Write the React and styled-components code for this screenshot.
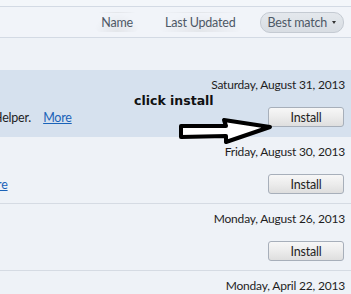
import React from 'react';
import styled, { createGlobalStyle } from 'styled-components';

const FONT = `Lato, 'Open Sans', sans-serif`;

const GlobalStyle = createGlobalStyle`
    html, body {
        margin: 0;
        padding: 0;
        background: #eef2f7;
        overflow: hidden;
    }
    body {
        font-family: ${FONT};
        letter-spacing: -0.2px;
    }
`;

const ROWS = [
    {
        date: 'Saturday, August 31, 2013',
        desc: 'Helper.',
        offset: -7,
        selected: true,
    },
    {
        date: 'Friday, August 30, 2013',
        desc: '',
        offset: -33,
    },
    {
        date: 'Monday, August 26, 2013',
        desc: null,
    },
    {
        date: 'Monday, April 22, 2013',
        desc: null,
        last: true,
    },
];

const Root = styled.div`
    width: 351px;
    height: 294px;
    overflow: hidden;
    background: #eef2f7;
    color: #1e1e1e;
`;
const TopStrip = styled.div`
    height: 6px;
    background: #f3f6fa;
    border-bottom: 1px solid #d3dae4;
`;
const SortBar = styled.div`
    display: flex;
    align-items: center;
    justify-content: flex-end;
    gap: 16px;
    height: 30px;
    padding-right: 7px;
    background: #f1f4f9;
    border-bottom: 1px solid #d3dae4;
`;
const SortItem = styled.div`
    display: flex;
    align-items: center;
    gap: 5px;
    height: 19px;
    padding: 0 7px;
    font-size: 12.5px;
    color: #4d5866;
    border-radius: 10px;
    background: ${({ active }) =>
        active
            ? 'linear-gradient(#e4e8ed, #d8dde3)'
            : 'radial-gradient(ellipse at 50% 100%, rgba(0,0,0,0.06), rgba(0,0,0,0) 70%)'};
    border: 1px solid ${({ active }) => (active ? '#c4cad2' : 'transparent')};
`;
const Caret = styled.span`
    width: 0;
    height: 0;
    border-left: 2.5px solid transparent;
    border-right: 2.5px solid transparent;
    border-top: 3px solid #333;
`;
const Spacer = styled.div`
    height: 32px;
`;
const Row = styled.div`
    position: relative;
    display: flex;
    flex-direction: column;
    height: ${({ last }) => (last ? 'auto' : '66px')};
    padding: 0 6px 0 0;
    background: ${({ selected }) => (selected ? '#d6e1ee' : 'transparent')};
    border-bottom: 1px solid ${({ selected }) => (selected ? '#d6e1ee' : '#d5dbe3')};
    box-sizing: content-box;
`;
const DateLine = styled.div`
    text-align: right;
    font-size: 12px;
    line-height: 16px;
    padding-top: 7px;
    color: #1e1e1e;
`;
const ActionLine = styled.div`
    display: flex;
    align-items: center;
    justify-content: space-between;
    margin-top: 14px;
`;
const Desc = styled.div`
    font-size: 12.5px;
    line-height: 16px;
    white-space: nowrap;
    color: #1e1e1e;
    margin-left: ${({ offset }) => offset}px;
    padding-top: 1px;
`;
const MoreLink = styled.a`
    color: #1a63b8;
    text-decoration: underline;
    margin-left: 12px;
    cursor: pointer;
`;
const InstallButton = styled.button`
    width: 76px;
    height: 20px;
    margin-right: 1px;
    padding: 0;
    font-family: ${FONT};
    font-size: 12.5px;
    letter-spacing: -0.2px;
    color: #1e1e1e;
    border: 1px solid #a7afba;
    border-radius: 3px;
    background: linear-gradient(#f7f7f7 0%, #ececec 50%, #dedede 100%);
`;
const Note = styled.div`
    position: absolute;
    left: 134px;
    top: 23px;
    font-family: 'DejaVu Sans', sans-serif;
    font-weight: bold;
    font-size: 12.5px;
    letter-spacing: 0;
    color: #111;
`;
const Arrow = styled.svg`
    position: absolute;
    left: 176px;
    top: 46px;
`;

const App = () => (
    <Root>
        <GlobalStyle />
        <TopStrip />
        <SortBar>
            <SortItem>Name</SortItem>
            <SortItem>Last Updated</SortItem>
            <SortItem active>
                Best match <Caret />
            </SortItem>
        </SortBar>
        <Spacer />
        {ROWS.map((row) => (
            <Row key={row.date} selected={row.selected} last={row.last}>
                <DateLine>{row.date}</DateLine>
                {!row.last && (
                    <ActionLine>
                        {row.desc !== null ? (
                            <Desc offset={row.offset}>
                                {row.desc}
                                <MoreLink>More</MoreLink>
                            </Desc>
                        ) : (
                            <span />
                        )}
                        <InstallButton>Install</InstallButton>
                    </ActionLine>
                )}
                {row.selected && (
                    <>
                        <Note>click install</Note>
                        <Arrow width="100" height="30" viewBox="0 0 100 30">
                            <path
                                d="M5 10 L50 10 L48 4 L94 11 L50 26 L50 20 L5 21 Z"
                                fill="#fff"
                                stroke="#000"
                                strokeWidth="4"
                                strokeLinejoin="round"
                            />
                        </Arrow>
                    </>
                )}
            </Row>
        ))}
    </Root>
);

export default App;
